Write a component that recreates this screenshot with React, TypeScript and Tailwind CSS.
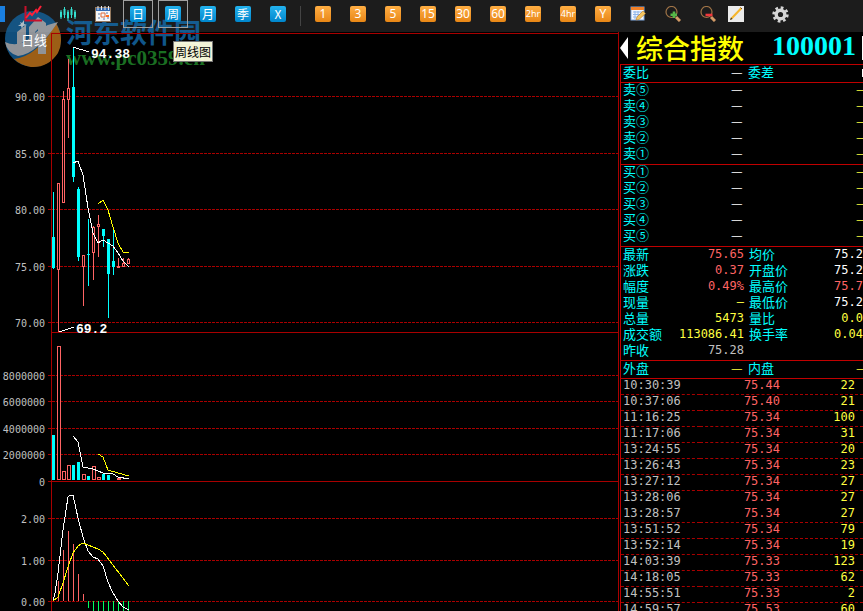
import React from 'react';

interface Candle {
  color: 'up' | 'down';
  open: number;
  close: number;
  high: number;
  low: number;
}

interface Field {
  label: string;
  value: string;
  color: string;
}

const RED = '#ff6464';
const CYAN = '#00ffff';
const GRID = '#a80000';

const periods = ['日', '周', '月', '季', 'X'];
const minutes = ['1', '3', '5', '15', '30', '60', '2hr', '4hr', 'Y'];

// All values are chart pixels, the chart starts right below the toolbar
const candles: Candle[] = [
  { color: 'down', open: 205, close: 236, high: 160, low: 237 },
  { color: 'up', open: 151, close: 238, high: 151, low: 300 },
  { color: 'up', open: 67, close: 171, high: 59, low: 171 },
  { color: 'up', open: 56, close: 68, high: 27, low: 106 },
  { color: 'down', open: 55, close: 145, high: 15, low: 150 },
  { color: 'down', open: 157, close: 225, high: 155, low: 229 },
  { color: 'up', open: 223, close: 235, high: 223, low: 274 },
  { color: 'down', open: 222, close: 223, high: 187, low: 254 },
  { color: 'up', open: 195, close: 221, high: 194, low: 248 },
  { color: 'up', open: 192, close: 195, high: 183, low: 225 },
  { color: 'down', open: 197, close: 204, high: 197, low: 215 },
  { color: 'down', open: 207, close: 242, high: 207, low: 286 },
  { color: 'down', open: 229, close: 235, high: 195, low: 243 },
  { color: 'up', open: 234, close: 236, high: 226, low: 236 },
  { color: 'up', open: 231, close: 235, high: 226, low: 235 },
  { color: 'up', open: 227, close: 232, high: 226, low: 232 },
];

const volumes = [45, 134, 9, 15, 15, 18, 6, 4, 14, 3, 6, 5, 0, 2, 0, 0];
const macd = [0, -20, -51, -70, -57, -27, -7, 7, 12, 12, 12, 12, 12, 12, 12, 12];

const gridLines = [
  { y: 64, label: '90.00' },
  { y: 121, label: '85.00' },
  { y: 177, label: '80.00' },
  { y: 234, label: '75.00' },
  { y: 290, label: '70.00' },
  { y: 343, label: '8000000' },
  { y: 369, label: '6000000' },
  { y: 396, label: '4000000' },
  { y: 422, label: '2000000' },
  { y: 449, label: '0', solid: true },
  { y: 486, label: '2.00' },
  { y: 528, label: '1.00' },
  { y: 569, label: '0.00' },
];

const lines = [
  { color: '#ffffff', points: '73,131 78,129 83,143 88,176 93,201 98,211 103,208 108,211 113,214 118,221 123,229 129,235' },
  { color: '#ffff00', points: '98,172 103,168 108,178 113,195 118,211 123,220 129,220' },
  { color: '#ffffff', points: '73,404 78,410 80,420 83,435 93,437 103,441 113,442 118,445 129,447' },
  { color: '#ffff00', points: '98,422 103,425 108,438 118,441 129,444' },
  { color: '#ffffff', points: '53,569 55,561 58,541 63,498 68,465 70,463 73,463 78,486 83,505 88,519 93,525 98,527 103,534 108,550 113,561 118,569 123,575 129,578' },
  { color: '#ffff00', points: '53,569 58,565 63,551 68,535 73,521 78,514 83,511 88,513 98,517 103,520 116,537 129,554' },
];

const asks = ['卖⑤', '卖④', '卖③', '卖②', '卖①'];
const bids = ['买①', '买②', '买③', '买④', '买⑤'];

const quoteRows: Field[][] = [
  [
    { label: '最新', value: '75.65', color: 'text-[#ff6464]' },
    { label: '均价', value: '75.2', color: 'text-white' },
  ],
  [
    { label: '涨跌', value: '0.37', color: 'text-[#ff6464]' },
    { label: '开盘价', value: '75.2', color: 'text-white' },
  ],
  [
    { label: '幅度', value: '0.49%', color: 'text-[#ff6464]' },
    { label: '最高价', value: '75.7', color: 'text-[#ff6464]' },
  ],
  [
    { label: '现量', value: '—', color: 'text-[#ffff40]' },
    { label: '最低价', value: '75.2', color: 'text-white' },
  ],
  [
    { label: '总量', value: '5473', color: 'text-[#ffff40]' },
    { label: '量比', value: '0.0', color: 'text-[#ffff40]' },
  ],
  [
    { label: '成交额', value: '113086.41', color: 'text-[#ffff40]' },
    { label: '换手率', value: '0.04%', color: 'text-[#ffff40]' },
  ],
  [{ label: '昨收', value: '75.28', color: 'text-[#c0c0c0]' }],
];

const ticks = [
  ['10:30:39', '75.44', '22'],
  ['10:37:06', '75.40', '21'],
  ['11:16:25', '75.34', '100'],
  ['11:17:06', '75.34', '31'],
  ['13:24:55', '75.34', '20'],
  ['13:26:43', '75.34', '23'],
  ['13:27:12', '75.34', '27'],
  ['13:28:06', '75.34', '27'],
  ['13:28:57', '75.34', '27'],
  ['13:51:52', '75.34', '79'],
  ['13:52:14', '75.34', '19'],
  ['14:03:39', '75.33', '123'],
  ['14:18:05', '75.33', '62'],
  ['14:55:51', '75.33', '2'],
  ['14:59:57', '75.53', '60'],
];

const iconButton = 'relative z-10 flex h-7 w-[30px] shrink-0 items-center justify-center';

const Toolbar = () => (
  <header className="flex h-8 shrink-0 gap-[5px] overflow-hidden bg-[#1c1c1c]">
    <button aria-label="分时" className="flex h-7 w-[13px] shrink-0 items-center">
      <span className="h-4 w-[5px] bg-[#1a7fe0]" />
    </button>
    <button aria-label="走势" className={iconButton}>
      <svg width="20" height="18" viewBox="0 0 20 18" fill="none">
        <path d="M2.500 1V15.500H19" stroke="#c8102a" strokeWidth="2" />
        <path d="M3 13L7 8L9 10L13 5L14 7L18 1" stroke="#ff2038" strokeWidth="2" />
      </svg>
    </button>
    <button aria-label="K线" className={iconButton}>
      <svg width="18" height="16" viewBox="0 0 18 16" stroke="#35e0d0" fill="#35e0d0">
        <path d="M2 4V13M5.500 1V12M9 4V15M12.500 1V12M16 4V13" />
        <path d="M1.500 6H2.500V11H1.500ZM5 3H6V9H5ZM8.500 6H9.500V12H8.500ZM12 3H13V9H12ZM15.500 6H16.500V11H15.500Z" />
      </svg>
    </button>
    <button aria-label="日历" className={iconButton}>
      <svg width="16" height="16" viewBox="0 0 16 16">
        <rect x="0.500" y="1.500" width="15" height="14" fill="#f4f6fa" stroke="#93785e" />
        <rect x="1" y="2" width="14" height="3" fill="#356cb5" />
        <path d="M3 0V4M6.500 0V4M10 0V4M13.500 0V4" stroke="#e8ecf2" />
        <path d="M3 8H5M11 7H13M3 12H5M8 13H10M12 12H14" stroke="#8fa5c8" strokeWidth="1.500" />
        <path d="M6 7H10V11H6Z" fill="none" stroke="#e06a3a" />
        <path d="M11 9H14V11H11Z" fill="#ff6a1a" />
      </svg>
    </button>
    {periods.map((p, i) => (
      <button
        key={p}
        className={`${iconButton} ${i < 2 ? 'border border-[#a0a0a0]' : ''}`}
      >
        <span className="flex size-4 items-center justify-center rounded-xs bg-linear-to-b from-[#22b2ee] to-[#0086cc] text-[12px] leading-4 text-white">
          {p}
        </span>
      </button>
    ))}
    <div className="flex h-7 w-[5px] shrink-0 justify-center pt-1.5">
      <div className="h-5 w-px bg-[#444444]" />
    </div>
    {minutes.map(m => (
      <button key={m} className={iconButton}>
        <span
          className={`flex size-4 items-center justify-center rounded-xs bg-linear-to-b from-[#ffae42] to-[#e88714] font-['Noto_Sans',sans-serif] leading-4 text-white ${
            m.length > 2 ? 'text-[9px]' : 'text-[12px]'
          }`}
        >
          {m}
        </span>
      </button>
    ))}
    <button aria-label="编辑" className={iconButton}>
      <svg width="16" height="16" viewBox="0 0 16 16">
        <rect x="1" y="1" width="13" height="13" fill="#f5f8fd" stroke="#7fa8df" />
        <rect x="1" y="1" width="13" height="3" fill="#f08028" />
        <path d="M3 6H12M3 8.500H12M3 11H8M5 5V13M8 5V10" stroke="#8eb5ea" />
        <path d="M6 14L7 11L13 5L15.500 7.500L9 13.500Z" fill="#f5c661" stroke="#b77725" strokeWidth="0.6" />
      </svg>
    </button>
    {[true, false].map(plus => (
      <button key={plus ? 'in' : 'out'} aria-label={plus ? '放大' : '缩小'} className={iconButton}>
        <svg width="16" height="16" viewBox="0 0 16 16" fill="none">
          <circle cx="6.500" cy="6" r="5.500" stroke="#a07447" strokeWidth="1.200" />
          <path d="M11 11L15 15" stroke="#d29a66" strokeWidth="3" />
          {plus ? (
            <path d="M9 5.500V12M5.500 8.800H12" stroke="#55b848" strokeWidth="2.600" />
          ) : (
            <path d="M5.500 9H12.500" stroke="#f0383c" strokeWidth="2.600" />
          )}
        </svg>
      </button>
    ))}
    <button aria-label="画线" className="flex h-7 w-4 shrink-0 items-center">
      <svg width="16" height="16" viewBox="0 0 16 16">
        <rect width="16" height="16" fill="#ebebeb" />
        <path d="M2 14L3 11.500L12.500 1.500L14 3L4.500 13Z" fill="#f5b52c" />
        <path d="M2 14L3 11.500L4.500 13Z" fill="#333333" />
        <path d="M12.500 1.500L14 3" stroke="#7a4a10" />
      </svg>
    </button>
    <button aria-label="设置" className={`${iconButton} ml-4`}>
      <svg width="17" height="17" viewBox="0 0 17 17" fill="none" stroke="#d5d5d5">
        <circle cx="8.500" cy="8.500" r="4.300" strokeWidth="3.400" />
        <circle cx="8.500" cy="8.500" r="6.900" strokeWidth="2.600" strokeDasharray="2.710 2.710" />
      </svg>
    </button>
  </header>
);

const Chart = () => (
  <svg
    className="block h-full w-full font-['DejaVu_Sans_Mono',monospace] text-[10px]"
    shapeRendering="crispEdges"
  >
    <g stroke={GRID}>
      <path d="M51.500 1V700" />
      <line x1="51" x2="100%" y1="1.500" y2="1.500" />
      <line x1="51" x2="100%" y1="300.500" y2="300.500" />
    </g>
    {gridLines.map(g => (
      <g key={g.label}>
        <line x1="48" x2="52" y1={g.y + 0.5} y2={g.y + 0.5} stroke={GRID} />
        <line
          x1="52"
          x2="100%"
          y1={g.y + 0.5}
          y2={g.y + 0.5}
          stroke={GRID}
          strokeDasharray={g.solid ? undefined : '3 1'}
        />
        <text x="45" y={g.y + 5} textAnchor="end" fill="#c0c0c0">
          {g.label}
        </text>
      </g>
    ))}

    {/* K line */}
    {candles.map((c, i) => {
      const x = 52 + i * 5;
      return c.color === 'down' ? (
        <g key={i} fill={CYAN}>
          <rect x={x + 1} y={c.high} width="1" height={c.low - c.high} />
          <rect x={x} y={c.open} width="3" height={c.close - c.open} />
        </g>
      ) : (
        <g key={i} fill={RED}>
          <rect x={x + 1} y={c.high} width="1" height={c.low - c.high} />
          <rect x={x + 0.5} y={c.open + 0.5} width="2" height={c.close - c.open - 1} fill="#000000" stroke={RED} />
        </g>
      );
    })}

    {/* Volume */}
    {volumes.map((v, i) => {
      if (!v) return null;
      const x = 52 + i * 5;
      return candles[i].color === 'down' ? (
        <rect key={i} x={x} y={448 - v} width="3" height={v} fill={CYAN} />
      ) : (
        <rect key={i} x={x + 0.5} y={448.5 - v} width="3" height={v - 1} fill="#000000" stroke={RED} />
      );
    })}

    {/* MACD */}
    {macd.map((m, i) => (
      <rect
        key={i}
        x={53 + i * 5}
        y={m < 0 ? 569 + m : 569}
        width="1"
        height={Math.abs(m)}
        fill={m < 0 ? RED : '#00ff60'}
      />
    ))}

    {lines.map(l => (
      <polyline key={l.points} points={l.points} fill="none" stroke={l.color} />
    ))}

    <path d="M73 15L89 20M59 300L74 295" stroke="#ffffff" />
    <g className="font-['Liberation_Mono',monospace] text-[13px] font-bold" fill="#ffffff">
      <text x="91" y="26">94.38</text>
      <text x="76" y="301">69.2</text>
    </g>
  </svg>
);

const Watermark = () => (
  <div className="pointer-events-none absolute top-2 left-1 flex opacity-80">
    <svg width="58" height="60" viewBox="0 0 58 60">
      <circle cx="29" cy="31" r="28" fill="#14629c" />
      <path d="M10 51Q34 48 52 15Q61 31 54 45Q44 60 27 59Q16 57 10 51Z" fill="#c4761c" />
      <path d="M1 34Q14 40 26 30Q36 18 54 14Q48 23 42 30V46H34V38Q24 47 14 48Q3 45 1 34Z" fill="#b4b8be" />
      <path d="M13 38V24L22 17V32M25 33V19L34 9L42 15V30H34V21L31 24V33Z" fill="#b4b8be" />
      <path d="M16 14L18 15L20 12V16L23 17L19 18L18 21L17 18L14 18L17 16Z" fill="#d6e4ef" />
    </svg>
    <div className="pt-2 pl-1">
      <p className="font-['Noto_Sans_CJK_SC',sans-serif] text-[27px] leading-8 font-bold text-[#146cad]">
        河东软件园
      </p>
      <p className="font-['Liberation_Serif',serif] text-[21px] leading-5 font-bold text-[#218a2b]">
        www.pc0359.cn
      </p>
    </div>
  </div>
);

const Row = ({ fields }: { fields: Field[] }) => (
  <div className="flex h-4 leading-[14px]">
    {fields.map((f, i) => (
      <div
        key={i}
        className={`flex justify-between ${i === 0 ? 'w-[121px] shrink-0' : 'ml-[5px] flex-1'}`}
      >
        <span className="whitespace-nowrap text-[#00ffff]">{f.label}</span>
        <span
          className={`${i === 0 ? '' : 'w-[29px]'} text-right font-['DejaVu_Sans_Mono',monospace] text-[12px] whitespace-nowrap ${f.color}`}
        >
          {f.value}
        </span>
      </div>
    ))}
  </div>
);

const Depth = ({ levels }: { levels: string[] }) => (
  <section className="border-t border-[#c00000] pb-px pl-0.5">
    {levels.map(l => (
      <div key={l} className="flex h-4 leading-[12px]">
        <span className="flex-1 text-[#00ffff]">{l}</span>
        <span className="w-[125px] text-white">—</span>
        <span className="w-[7px] text-[#ffff40]">—</span>
      </div>
    ))}
  </section>
);

const QuotePanel = () => (
  <aside className="w-[243px] shrink-0 overflow-hidden">
    <div className="flex h-8 items-center justify-between">
      <button aria-label="上一个" className="w-4">
        <svg width="8" height="22" viewBox="0 0 8 22">
          <path d="M8 0V22L0 11Z" fill="#ffffff" />
        </svg>
      </button>
      <h1 className="flex-1 text-[27px] leading-7 font-medium whitespace-nowrap text-[#ffff00]">综合指数</h1>
      <span className="pr-1.5 pb-1 font-['Liberation_Serif',serif] text-[28px] leading-7 font-bold text-[#00ffff]">
        100001
      </span>
      <span className="h-6 w-px bg-white" />
    </div>

    <div className="border-l border-[#c00000]">
      <section className="border-t border-[#c00000] pb-px pl-0.5">
        <div className="flex h-4 leading-[14px] text-[#00ffff]">
          <span className="w-[108px]">委比</span>
          <span className="w-[17px] text-white">—</span>
          <span className="flex-1">委差</span>
          <span className="mt-1 h-2 w-px bg-white" />
        </div>
      </section>
      <Depth levels={asks} />
      <Depth levels={bids} />
      <section className="border-t border-[#c00000] pb-px pl-0.5">
        {quoteRows.map(fields => (
          <Row key={fields[0].label} fields={fields} />
        ))}
      </section>
      <section className="border-t border-[#c00000] pb-px pl-0.5">
        <div className="flex h-4 leading-[14px] text-[#00ffff]">
          <span className="w-[108px]">外盘</span>
          <span className="w-[17px] text-[#ffff40]">—</span>
          <span className="flex-1">内盘</span>
          <span className="w-[7px] text-[#ffff40]">—</span>
        </div>
      </section>
      <table className="w-full border-collapse border-t border-[#c00000] font-['DejaVu_Sans_Mono',monospace] text-[12px] leading-[12px]">
        <tbody>
          {ticks.map(([time, price, volume]) => (
            <tr
              key={time}
              className={`h-4 border-[#a80000] align-top ${time === '13:28:06' ? '' : 'border-b border-dashed'}`}
            >
              <td className="p-0 pl-0.5 text-[#c0c0c0]">{time}</td>
              <td className="w-[80px] p-0 text-right text-[#ff6464]">{price}</td>
              <td className="w-[83px] p-0 pr-2 text-right text-[#ffff40]">{volume}</td>
            </tr>
          ))}
        </tbody>
      </table>
    </div>
  </aside>
);

const App = () => {
  return (
    <div className="relative flex h-screen flex-col overflow-hidden bg-black font-['Noto_Sans_CJK_SC',sans-serif] text-[13px]">
      <Toolbar />
      <Watermark />
      <main className="relative flex min-h-0 flex-1">
        <div className="mr-px min-w-0 flex-1 border-r border-[#a80000]">
          <Chart />
        </div>
        <QuotePanel />
      </main>
      <span className="absolute top-8 left-[21px] leading-4 text-white">日线</span>
      <div
        role="tooltip"
        className="absolute top-[41px] left-[173px] border border-[#767676] bg-[#ffffe1]/95 px-px text-[12px] leading-[19px] text-black"
      >
        周线图
      </div>
    </div>
  );
};

export default App;
